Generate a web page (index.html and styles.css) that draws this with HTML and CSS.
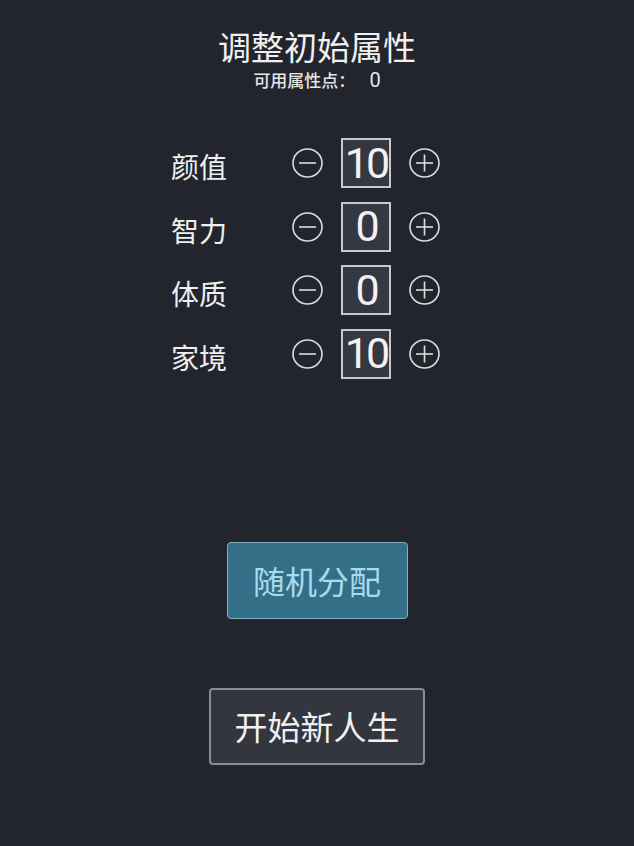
FILE: index.html
```html
<!DOCTYPE html>
<html lang="zh-CN">
<head>
  <meta charset="UTF-8" />
  <title>调整初始属性</title>
  <link rel="stylesheet" href="styles.css">
</head>
<body>
  <div class="page">
    <h1 class="title">调整初始属性</h1>
    <div class="points">可用属性点：<span class="points-num">0</span></div>

    <div class="stats">
      <div class="stat-row">
        <span class="stat-label">颜值</span>
        <button class="round-btn" aria-label="减少">
          <svg width="31" height="30" viewBox="0 0 31 30"><ellipse cx="15.5" cy="15" rx="14.5" ry="14" /><line x1="7" y1="15" x2="24" y2="15" /></svg>
        </button>
        <div class="stat-value">10</div>
        <button class="round-btn" aria-label="增加">
          <svg width="31" height="30" viewBox="0 0 31 30"><ellipse cx="15.5" cy="15" rx="14.5" ry="14" /><line x1="7" y1="15" x2="24" y2="15" /><line x1="15.5" y1="6.5" x2="15.5" y2="23.5" /></svg>
        </button>
      </div>
      <div class="stat-row">
        <span class="stat-label">智力</span>
        <button class="round-btn" aria-label="减少">
          <svg width="31" height="30" viewBox="0 0 31 30"><ellipse cx="15.5" cy="15" rx="14.5" ry="14" /><line x1="7" y1="15" x2="24" y2="15" /></svg>
        </button>
        <div class="stat-value">0</div>
        <button class="round-btn" aria-label="增加">
          <svg width="31" height="30" viewBox="0 0 31 30"><ellipse cx="15.5" cy="15" rx="14.5" ry="14" /><line x1="7" y1="15" x2="24" y2="15" /><line x1="15.5" y1="6.5" x2="15.5" y2="23.5" /></svg>
        </button>
      </div>
      <div class="stat-row">
        <span class="stat-label">体质</span>
        <button class="round-btn" aria-label="减少">
          <svg width="31" height="30" viewBox="0 0 31 30"><ellipse cx="15.5" cy="15" rx="14.5" ry="14" /><line x1="7" y1="15" x2="24" y2="15" /></svg>
        </button>
        <div class="stat-value">0</div>
        <button class="round-btn" aria-label="增加">
          <svg width="31" height="30" viewBox="0 0 31 30"><ellipse cx="15.5" cy="15" rx="14.5" ry="14" /><line x1="7" y1="15" x2="24" y2="15" /><line x1="15.5" y1="6.5" x2="15.5" y2="23.5" /></svg>
        </button>
      </div>
      <div class="stat-row">
        <span class="stat-label">家境</span>
        <button class="round-btn" aria-label="减少">
          <svg width="31" height="30" viewBox="0 0 31 30"><ellipse cx="15.5" cy="15" rx="14.5" ry="14" /><line x1="7" y1="15" x2="24" y2="15" /></svg>
        </button>
        <div class="stat-value">10</div>
        <button class="round-btn" aria-label="增加">
          <svg width="31" height="30" viewBox="0 0 31 30"><ellipse cx="15.5" cy="15" rx="14.5" ry="14" /><line x1="7" y1="15" x2="24" y2="15" /><line x1="15.5" y1="6.5" x2="15.5" y2="23.5" /></svg>
        </button>
      </div>
    </div>

    <button class="btn btn-random">随机分配</button>
    <button class="btn btn-start">开始新人生</button>
  </div>
</body>
</html>
```

FILE: styles.css
```css
body {
  margin: 0;
  background: #22252d;
  color: #eeeeee;
  font-family: "Noto Sans CJK SC", "Noto Sans", sans-serif;
}

.page {
  display: flex;
  flex-direction: column;
  align-items: center;
  padding-top: 22px;
  min-height: 820px;
}

.title {
  margin: 0;
  font-size: 33px;
  font-weight: normal;
  line-height: 48px;
  color: #f0f0f0;
}

.points {
  margin-top: 1px;
  font-size: 17px;
  font-weight: 500;
  line-height: 18px;
  color: #e6e6e6;
}

.points-num {
  margin-left: 14px;
  font-family: Roboto, "Noto Sans", sans-serif;
  font-size: 20px;
  font-weight: normal;
}

.stats {
  align-self: flex-start;
  margin: 49px 0 0 171px;
  display: flex;
  flex-direction: column;
  gap: 13.5px;
}

.stat-row {
  display: flex;
  align-items: center;
  height: 50px;
}

.stat-label {
  width: 121px;
  padding-top: 6px;
  font-size: 28px;
  line-height: 40px;
  color: #efefef;
}

.round-btn {
  padding: 0;
  border: none;
  background: none;
  width: 31px;
  height: 30px;
  cursor: pointer;
}

.round-btn svg {
  display: block;
  fill: none;
  stroke: #dcdcdc;
  stroke-width: 1.6;
}

.stat-value {
  box-sizing: border-box;
  width: 50px;
  height: 50px;
  margin: 0 18px;
  border: 2px solid #c9c9c9;
  background: #353843;
  display: flex;
  align-items: center;
  justify-content: center;
  font-family: Roboto, "Noto Sans", sans-serif;
  font-size: 43px;
  letter-spacing: -3px;
  color: #f2f2f2;
  line-height: 1;
}

.btn {
  box-sizing: border-box;
  height: 77px;
  border-radius: 4px;
  font-family: "Noto Sans CJK SC", sans-serif;
  cursor: pointer;
}

.btn-random {
  margin-top: 163px;
  width: 181px;
  border: 1px solid #7fb0c2;
  background: #346f88;
  color: #a9dbee;
  font-size: 32px;
}

.btn-start {
  margin-top: 69px;
  width: 216px;
  border: 2px solid #8a8d94;
  background: #33363f;
  color: #f0f0f0;
  font-size: 33px;
}
```
